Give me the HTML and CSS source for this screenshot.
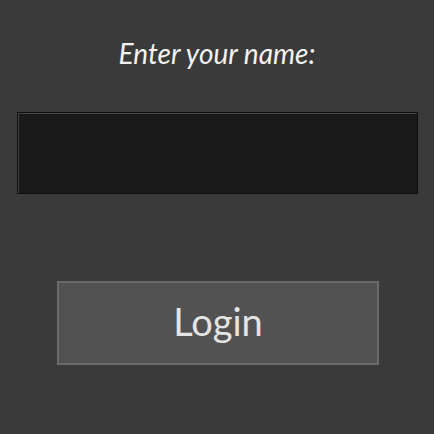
FILE: index.html
```html
<!DOCTYPE html>
<html>
<head>
<meta charset="utf-8">
<link rel="stylesheet" href="styles.css">
</head>
<body>
<main class="login">
  <label class="prompt" for="name">Enter your name:</label>
  <input class="name-input" id="name" type="text">
  <button class="login-btn" type="button">Login</button>
</main>
</body>
</html>
```
FILE: styles.css
```css
html, body {
  margin: 0;
  padding: 0;
  background: #3a3a3a;
  width: 434px;
  height: 434px;
  overflow: hidden;
}
.login {
  display: flex;
  flex-direction: column;
  align-items: center;
  padding-top: 36px;
  font-family: Lato, "Noto Sans", sans-serif;
}
.prompt {
  font-style: italic;
  font-size: 28px;
  line-height: 34px;
  color: #f2f2f2;
}
.name-input {
  box-sizing: border-box;
  margin: 42px 0 0 1px;
  width: 401px;
  height: 82px;
  background: #191919;
  border: 1px solid #0e0e0e;
  box-shadow: inset 1px 1px 0 #444;
  outline: none;
  padding: 0 10px;
  color: #eee;
  font-family: inherit;
  font-size: 22px;
}
.login-btn {
  box-sizing: border-box;
  margin: 87px 0 0 2px;
  width: 322px;
  height: 84px;
  background: #525252;
  border: 2px solid #6a6a6a;
  color: #e4e4e4;
  font-family: inherit;
  font-size: 38px;
  padding: 0 0 5px;
}
```
